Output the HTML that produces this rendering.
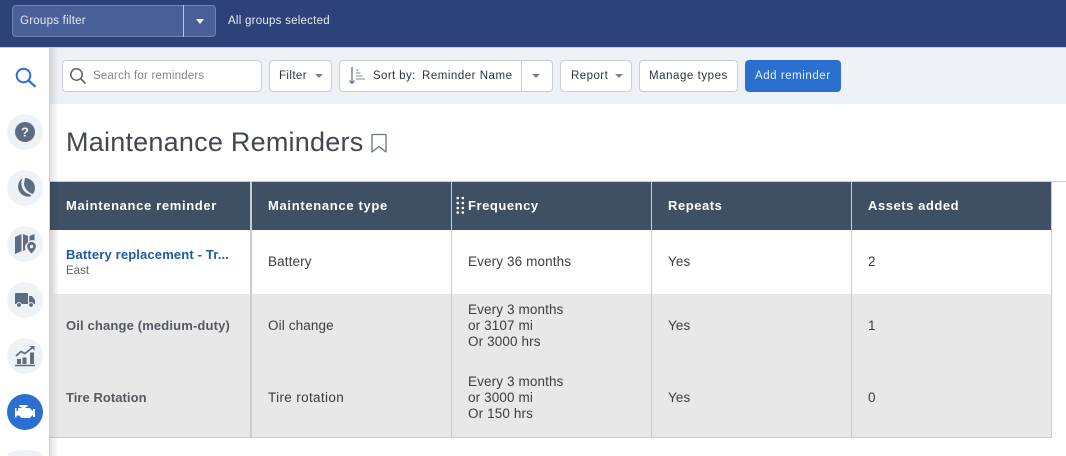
<!DOCTYPE html>
<html><head><meta charset="utf-8">
<style>
*{box-sizing:border-box}
html,body{margin:0;padding:0;width:1066px;height:456px;overflow:hidden;background:#fff;font-family:"Liberation Sans",sans-serif;color:#333}
#w{position:relative;width:1066px;height:456px;overflow:hidden}
.a{position:absolute;white-space:nowrap}
.btn{position:absolute;top:60px;height:32px;background:#fff;border:1px solid #c8ccd6;border-radius:4px;font-size:11.5px;line-height:31px;color:#2b3440;white-space:nowrap;letter-spacing:.3px}
.car{position:absolute;width:0;height:0;border-left:4px solid transparent;border-right:4px solid transparent;border-top:4px solid #76849a}
.c{position:absolute;width:36px;height:36px;border-radius:50%;background:#eef1f6;left:7px}
.c svg{position:absolute;left:0;top:0}
.th{position:absolute;top:198px;font-size:13px;font-weight:bold;color:#fff;line-height:16px;letter-spacing:.55px;white-space:nowrap}
.t{position:absolute;font-size:13.5px;line-height:16px;color:#3a3d42;white-space:nowrap;letter-spacing:.12px}
.b{font-weight:bold;color:#555a60;font-size:13px;letter-spacing:.15px}
.v{position:absolute;width:1px;background:#c8ccd4;top:182px;height:255px}
</style></head><body><div id="w">
<div class="a" style="left:0;top:0;width:1066px;height:47px;background:#2d4279"></div>
<div class="a" style="left:0;top:47px;width:1066px;height:1px;background:#c6cad2"></div>
<div class="a" style="left:12px;top:5px;width:204px;height:32px;background:#4a6098;border:1px solid #6f82b0;border-radius:4px"></div>
<div class="a" style="left:183px;top:5px;width:1px;height:32px;background:#b9c3da"></div>
<div class="a" style="left:20px;top:13px;font-size:11.5px;line-height:17px;color:#e6eaf3;letter-spacing:.25px">Groups filter</div>
<div class="car" style="left:196px;top:19px;border-top:5px solid #fff"></div>
<div class="a" style="left:228px;top:13px;font-size:11.5px;line-height:17px;color:#e6eaf3;letter-spacing:.25px">All groups selected</div>

<div class="a" style="left:50px;top:48px;width:1016px;height:56px;background:#eef1f6"></div>
<div class="a" style="left:50px;top:48px;width:9px;height:408px;background:linear-gradient(90deg,rgba(0,0,0,.11),rgba(0,0,0,0))"></div>
<div class="a" style="left:49px;top:48px;width:1px;height:408px;background:#cfd2d8"></div>

<div class="btn" style="left:62px;width:200px"></div>
<svg class="a" style="left:69px;top:67px" width="18" height="18" viewBox="0 0 18 18"><circle cx="7.500" cy="7.500" r="5.700" fill="none" stroke="#5f6368" stroke-width="1.500"/><path d="M11.800 11.800L16.500 16.500" stroke="#5f6368" stroke-width="1.600"/></svg>
<div class="a" style="left:93px;top:68px;font-size:11.5px;line-height:17px;color:#80858d;letter-spacing:.2px">Search for reminders</div>

<div class="btn" style="left:269px;width:63px;padding-left:9px;letter-spacing:.4px">Filter</div>
<div class="car" style="left:315px;top:74px"></div>

<div class="btn" style="left:339px;width:214px"></div>
<div class="a" style="left:521px;top:60px;width:1px;height:32px;background:#c8ccd6"></div>
<svg class="a" style="left:348px;top:66px" width="18" height="20" viewBox="0 0 18 20"><path d="M4 1V17M1.500 14.500L4 17.500L6.500 14.500" fill="none" stroke="#5a6a80" stroke-width="1.200"/><path d="M8 4H10.500M8 7H12.500M8 10H14.500M8 13H17" stroke="#7d8a9c" stroke-width="1.100"/></svg>
<div class="a" style="left:373px;top:68px;font-size:11.5px;line-height:17px;color:#2b3440;letter-spacing:.38px">Sort by:</div>
<div class="a" style="left:422px;top:68px;font-size:11.5px;line-height:17px;color:#2b3440;letter-spacing:.52px">Reminder Name</div>
<div class="car" style="left:532px;top:74px"></div>

<div class="btn" style="left:560px;width:72px;padding-left:10px;letter-spacing:.45px">Report</div>
<div class="car" style="left:615px;top:74px"></div>
<div class="btn" style="left:639px;width:99px;padding-left:9px;letter-spacing:.55px">Manage types</div>
<div class="btn" style="left:745px;width:96px;padding-left:9px;background:#2b6fd1;border-color:#2b6fd1;color:#e8f0fb;letter-spacing:.55px">Add reminder</div>

<div class="a" style="left:66px;top:125px;font-size:27px;line-height:34px;color:#43484e;letter-spacing:.23px">Maintenance Reminders</div>
<svg class="a" style="left:370px;top:133px" width="18" height="20" viewBox="0 0 18 20"><path d="M2 1.500H16V19L9 13.500L2 19Z" fill="none" stroke="#66768a" stroke-width="1.300" stroke-linejoin="round"/></svg>

<!-- sidebar -->
<svg class="a" style="left:15px;top:66px" width="22" height="22" viewBox="0 0 22 22"><circle cx="8.500" cy="9.500" r="6.800" fill="none" stroke="#2b6fd1" stroke-width="2"/><path d="M13.500 14.500L20.500 20.800" stroke="#2b6fd1" stroke-width="2.200"/></svg>

<div class="c" style="top:114px"><svg width="36" height="36" viewBox="0 0 36 36"><circle cx="18" cy="18" r="10" fill="#5d6c82"/><text x="18" y="22.500" text-anchor="middle" font-family="Liberation Sans" font-weight="bold" font-size="13" fill="#eef1f6">?</text></svg></div>
<div class="c" style="top:170px"><svg width="36" height="36" viewBox="0 0 36 36"><path d="M18 8A10 10 0 0 1 26 24C22 23 17.500 19 17 14Z" fill="#5d6c82"/><path d="M15.500 8.300A10 10 0 0 0 24.500 26L22 24C17.500 23 13.500 18 14.500 11Z" fill="#5d6c82"/></svg></div>
<div class="c" style="top:226px"><svg width="36" height="36" viewBox="0 0 36 36"><path d="M8 11L14.500 8V25L8 28ZM16 8L21 10V16.500C18 18 17.500 21 18.500 24L16 25ZM22.500 10L27.500 8V14.500C26 14 24 14 22.500 15Z" fill="#5d6c82"/><path d="M24.500 15.500A4.800 4.800 0 0 1 29.300 20.300C29.300 23.500 24.500 28 24.500 28S19.700 23.500 19.700 20.300A4.800 4.800 0 0 1 24.500 15.500Z" fill="#5d6c82" stroke="#eef1f6" stroke-width=".8"/><circle cx="24.500" cy="20.500" r="1.700" fill="#eef1f6"/></svg></div>
<div class="c" style="top:282px"><svg width="36" height="36" viewBox="0 0 36 36"><path d="M9 11H20A1 1 0 0 1 21 12V22H8V12A1 1 0 0 1 9 11Z" fill="#5d6c82"/><path d="M22 14H25L28 18V22H22Z" fill="#5d6c82"/><circle cx="12" cy="23" r="2.400" fill="#5d6c82" stroke="#eef1f6"/><circle cx="24" cy="23" r="2.400" fill="#5d6c82" stroke="#eef1f6"/></svg></div>
<div class="c" style="top:338px"><svg width="36" height="36" viewBox="0 0 36 36"><path d="M8 27.500H28" stroke="#5d6c82" stroke-width="1.600"/><path d="M10 21H14V26H10ZM15.500 19.500H19.500V26H15.500ZM23 14.500H27V26H23Z" fill="#5d6c82"/><path d="M9 18L14 13.500L18 15.500L25.500 9.500" fill="none" stroke="#5d6c82" stroke-width="1.700"/><path d="M22.500 8H27.500V12.500Z" fill="#5d6c82"/></svg></div>
<div class="c" style="top:394px;background:#2b6fd1"><svg width="36" height="36" viewBox="0 0 36 36"><path d="M8 14H9.500V17H11V14H14.500V13H12.500V11H20.500V13H18.500V14H23L25 16.500H26V15H28V23H26V21.500H25L23 24H14.500L12 21.500H9.500V23.500H8Z" fill="#fff"/></svg></div>
<div class="a" style="left:7px;top:450px;width:36px;height:6px;overflow:hidden"><div style="width:36px;height:6px;border-radius:18px 18px 0 0/6px 6px 0 0;background:#eef1f6"></div></div>

<!-- table -->
<div class="a" style="left:50px;top:181px;width:1016px;height:1px;background:#c8ccd4"></div>
<div class="a" style="left:50px;top:182px;width:1001px;height:48px;background:#3f5064"></div>
<div class="a" style="left:50px;top:294px;width:1001px;height:143px;background:#e8e8e8"></div>
<div class="a" style="left:50px;top:437px;width:1002px;height:1px;background:#c8ccd4"></div>
<div class="a" style="left:50px;top:181px;width:9px;height:257px;background:linear-gradient(90deg,rgba(0,0,0,.08),rgba(0,0,0,0))"></div>
<div class="v" style="left:250px;width:2px"></div>
<div class="v" style="left:451px"></div>
<div class="v" style="left:651px"></div>
<div class="v" style="left:851px"></div>
<div class="v" style="left:1051px"></div>

<div class="th" style="left:66px;letter-spacing:.65px">Maintenance reminder</div>
<div class="th" style="left:268px;letter-spacing:.68px">Maintenance type</div>
<svg class="a" style="left:456px;top:196px" width="9" height="19" viewBox="0 0 9 19" fill="#fff"><circle cx="1.700" cy="2" r="1.300"/><circle cx="6.800" cy="2" r="1.300"/><circle cx="1.700" cy="7" r="1.300"/><circle cx="6.800" cy="7" r="1.300"/><circle cx="1.700" cy="12" r="1.300"/><circle cx="6.800" cy="12" r="1.300"/><circle cx="1.700" cy="16.500" r="1.300"/><circle cx="6.800" cy="16.500" r="1.300"/></svg>
<div class="th" style="left:468px">Frequency</div>
<div class="th" style="left:668px">Repeats</div>
<div class="th" style="left:868px">Assets added</div>

<div class="t b" style="left:66px;top:247px;color:#1f5aa8">Battery replacement - Tr...</div>
<div class="a" style="left:66px;top:263px;font-size:11.5px;line-height:16px;color:#5c6066">East</div>
<div class="t" style="left:268px;top:254px">Battery</div>
<div class="t" style="left:468px;top:254px">Every 36 months</div>
<div class="t" style="left:668px;top:254px">Yes</div>
<div class="t" style="left:868px;top:254px">2</div>

<div class="t b" style="left:66px;top:318px;letter-spacing:.15px">Oil change (medium-duty)</div>
<div class="t" style="left:268px;top:318px">Oil change</div>
<div class="t" style="left:468px;top:302px">Every 3 months<br>or 3107 mi<br>Or 3000 hrs</div>
<div class="t" style="left:668px;top:318px">Yes</div>
<div class="t" style="left:868px;top:318px">1</div>

<div class="t b" style="left:66px;top:390px;letter-spacing:.05px">Tire Rotation</div>
<div class="t" style="left:268px;top:390px;letter-spacing:.35px">Tire rotation</div>
<div class="t" style="left:468px;top:374px">Every 3 months<br>or 3000 mi<br>Or 150 hrs</div>
<div class="t" style="left:668px;top:390px">Yes</div>
<div class="t" style="left:868px;top:390px">0</div>
</div></body></html>
